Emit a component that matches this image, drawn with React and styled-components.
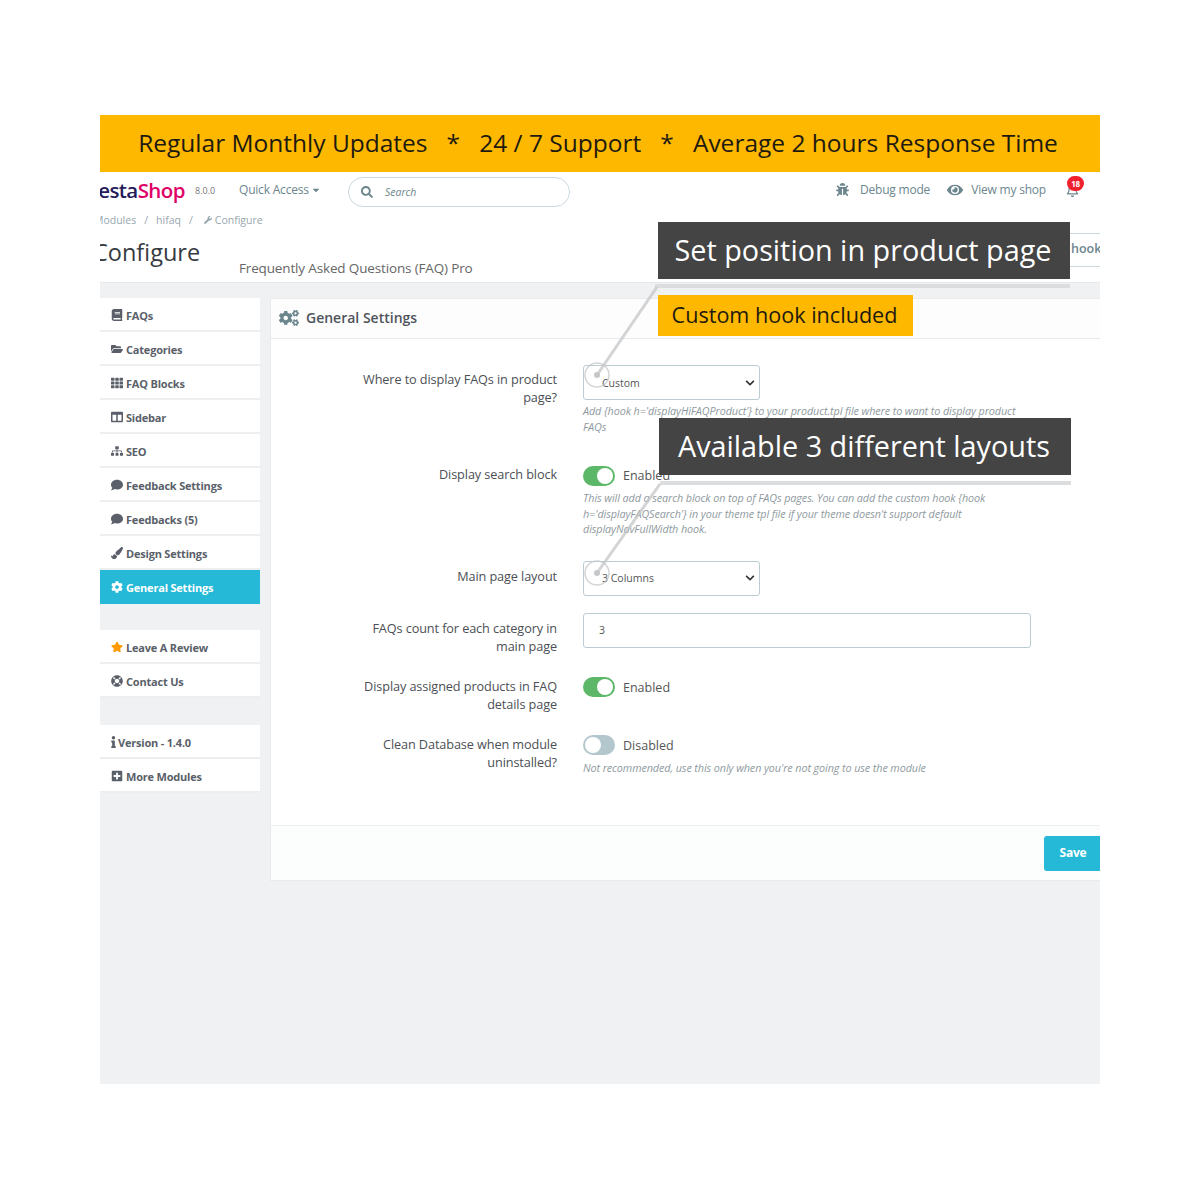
import React from "react";
import styled, { createGlobalStyle } from "styled-components";
import {
  FaBook, FaFolderOpen, FaTh, FaColumns, FaSitemap, FaComment, FaPaintBrush, FaCog,
  FaStar, FaLifeRing, FaInfo, FaPlusSquare, FaBug, FaEye, FaRegBell, FaSearch, FaWrench,
  FaCogs, FaCaretDown, FaChevronDown,
} from "react-icons/fa";

const Global = createGlobalStyle`
  body {
    margin: 0;
    background: #fff;
    font-family: "Open Sans", "Liberation Sans", sans-serif;
  }
`;

const Frame = styled.div`
  position: relative;
  overflow: hidden;
  width: 1000px;
  height: 969px;
  margin: 115px auto 0;
  background: #eff1f2;
`;

const Banner = styled.div`
  height: 57px;
  padding-right: 4px;
  background: #ffb800;
  color: #1e1a10;
  font-size: 24.5px;
  line-height: 55px;
  white-space: pre;
  text-align: center;
`;

const Header = styled.header`
  height: 111px;
  background: #fff;
  border-bottom: 1px solid #e6e9ea;
  box-sizing: border-box;
`;

const TopBar = styled.div`
  display: flex;
  align-items: center;
  height: 37px;
  color: #6c868e;
  font-size: 12px;
`;

const Logo = styled.div`
  margin: -2px 0 0 -22px;
  width: 107px;
  font-size: 20.5px;
  font-weight: 600;
  letter-spacing: -0.6px;
  color: #251b5b;
  white-space: nowrap;
  span {
    color: #df0067;
  }
`;

const Version = styled.span`
  margin-left: 10px;
  width: 44px;
  font-size: 9px;
  color: #777;
`;

const QuickAccess = styled.div`
  display: flex;
  align-items: center;
  gap: 2px;
  width: 109px;
  color: #6c868e;
  letter-spacing: -0.2px;
  margin-top: -2px;
`;

const SearchBox = styled.div`
  display: flex;
  align-items: center;
  gap: 12px;
  box-sizing: border-box;
  width: 222px;
  height: 30px;
  margin-top: 2px;
  padding-left: 12px;
  border: 1px solid #c9d9de;
  border-radius: 15px;
  color: #6c868e;
  font-size: 10.5px;
  font-style: italic;
`;

const TopRight = styled.div`
  display: flex;
  align-items: center;
  margin-left: auto;
  margin-right: 21px;
  letter-spacing: -0.2px;
  margin-top: -2px;
`;

const TopLink = styled.span`
  display: flex;
  align-items: center;
  gap: ${(p) => p.$gap}px;
  margin-right: ${(p) => p.$right}px;
`;

const BellWrap = styled.span`
  position: relative;
  display: flex;
  font-size: 13px;
  margin-top: 2px;
`;

const Badge = styled.span`
  position: absolute;
  top: -8px;
  left: 1px;
  width: 17px;
  height: 15px;
  border-radius: 8px;
  background: #f0202f;
  color: #fff;
  font-size: 8px;
  font-weight: 700;
  line-height: 15px;
  text-align: center;
`;

const Crumbs = styled.div`
  display: flex;
  align-items: center;
  gap: 8px;
  height: 18px;
  margin: 2px 0 1px -6px;
  color: #97a7ae;
  font-size: 10.5px;
  svg {
    font-size: 8px;
    margin-right: -5px;
    margin-left: 3px;
  }
`;

const TitleRow = styled.div`
  display: flex;
  align-items: flex-end;
  height: 46px;
  position: relative;
`;

const Title = styled.h1`
  margin: 0 0 0 -7px;
  width: 146px;
  align-self: flex-start;
  padding-top: 6px;
  font-size: 23.5px;
  font-weight: 400;
  line-height: 32px;
  color: #363a41;
`;

const Subtitle = styled.span`
  font-size: 13.5px;
  letter-spacing: -0.15px;
  color: #666;
  margin-bottom: -1px;
`;

const HookButton = styled.span`
  position: absolute;
  top: 3px;
  right: -30px;
  box-sizing: border-box;
  width: 100px;
  height: 34px;
  padding-left: 40px;
  border: 1px solid #c9d9de;
  color: #6c868e;
  font-size: 12.5px;
  font-weight: 600;
  line-height: 30px;
`;

const Body = styled.div`
  display: flex;
  gap: 10px;
  padding-top: 15px;
`;

const Side = styled.nav`
  display: flex;
  flex-direction: column;
  gap: 26px;
  width: 160px;
  flex: none;
`;

const SideGroup = styled.div`
  display: flex;
  flex-direction: column;
  margin-top: ${(p) => p.$top || 0}px;
`;

const SideItem = styled.div`
  display: flex;
  align-items: center;
  gap: 3px;
  box-sizing: border-box;
  height: 34px;
  padding: 2px 0 0 11px;
  font-size: 11px;
  font-weight: 700;
  letter-spacing: -0.2px;
  color: ${(p) => (p.$active ? "#fff" : "#5a5f69")};
  background: ${(p) => (p.$active ? "#25b9d7" : "#fff")};
  border-bottom: 2px solid ${(p) => (p.$active ? "#25b9d7" : "#eceeef")};
  svg {
    flex: none;
    font-size: 12px;
  }
`;

const InfoIcon = styled(FaInfo)`
  width: 5px;
  margin-right: -1px;
`;

const Panel = styled.section`
  flex: none;
  width: 850px;
  height: 583px;
  box-sizing: border-box;
  background: #fff;
  border: 1px solid #e8eaeb;
  display: flex;
  flex-direction: column;
`;

const PanelHead = styled.div`
  display: flex;
  align-items: center;
  gap: 7px;
  height: 40px;
  flex: none;
  padding: 0 0 2px 8px;
  box-sizing: border-box;
  border-bottom: 1px solid #e8eaeb;
  font-size: 14px;
  font-weight: 600;
  color: #4f545c;
  background: #fdfdfd;
  svg {
    font-size: 20px;
    color: #6c868e;
  }
`;

const Form = styled.div`
  flex: 1;
  padding-top: 26px;
`;

const Row = styled.div`
  display: grid;
  grid-template-columns: 286px 1fr;
  column-gap: 26px;
  margin-bottom: ${(p) => p.$after}px;
`;

const Label = styled.label`
  padding-top: ${(p) => p.$top || 0}px;
  font-size: 12.7px;
  line-height: 18px;
  letter-spacing: -0.1px;
  color: #4c4f55;
  text-align: right;
`;

const Select = styled.div`
  display: flex;
  align-items: center;
  justify-content: space-between;
  box-sizing: border-box;
  width: 177px;
  height: 35px;
  padding: 0 4px 0 18px;
  border: 1px solid #bbcdd2;
  border-radius: 3px;
  font-size: 10.5px;
  color: #555;
  svg {
    font-size: 10px;
    color: #333;
  }
`;

const Input = styled.div`
  box-sizing: border-box;
  width: 448px;
  height: 35px;
  padding-left: 15px;
  border: 1px solid #bbcdd2;
  border-radius: 3px;
  font-size: 10.5px;
  line-height: 33px;
  color: #555;
`;

const SwitchRow = styled.div`
  display: flex;
  align-items: center;
  gap: 8px;
  height: 21px;
  font-size: 12.5px;
  color: #555;
`;

const Track = styled.span`
  position: relative;
  display: block;
  width: 32px;
  height: 20px;
  border-radius: 10px;
  background: ${(p) => (p.$on ? "#5cb868" : "#b3c7cd")};
  &::after {
    content: "";
    position: absolute;
    top: 2px;
    left: ${(p) => (p.$on ? "14px" : "2px")};
    width: 16px;
    height: 16px;
    border-radius: 50%;
    background: #fff;
  }
`;

const Help = styled.p`
  margin: ${(p) => p.$top}px 0 0;
  width: 440px;
  font-size: 10.8px;
  line-height: 15.5px;
  font-style: italic;
  letter-spacing: -0.1px;
  color: #8f9aa0;
  white-space: pre;
`;

const PanelFoot = styled.div`
  display: flex;
  justify-content: flex-end;
  align-items: center;
  flex: none;
  height: 54px;
  padding-right: 5px;
  border-top: 1px solid #eceeef;
  background: #fcfdfd;
`;

const Save = styled.button`
  width: 70px;
  height: 35px;
  padding: 0 12px 2px 0;
  border: 0;
  border-radius: 3px;
  background: #25b9d7;
  color: #fff;
  font-family: inherit;
  font-size: 12px;
  font-weight: 700;
  letter-spacing: -0.2px;
`;

const Lines = styled.svg`
  position: absolute;
  inset: 0;
  width: 1000px;
  height: 969px;
  pointer-events: none;
`;

const Callout = styled.div`
  position: absolute;
  left: ${(p) => p.$x}px;
  top: ${(p) => p.$y}px;
  width: ${(p) => p.$w}px;
  height: ${(p) => p.$h}px;
  padding-right: 2px;
  box-sizing: border-box;
  background: ${(p) => (p.$accent ? "#ffb800" : "#444444")};
  color: ${(p) => (p.$accent ? "#1e1a10" : "#fff")};
  font-size: ${(p) => p.$size}px;
  line-height: ${(p) => p.$h - 2}px;
  text-align: center;
  white-space: nowrap;
`;

const mainItems = [
  [FaBook, "FAQs"],
  [FaFolderOpen, "Categories"],
  [FaTh, "FAQ Blocks"],
  [FaColumns, "Sidebar"],
  [FaSitemap, "SEO"],
  [FaComment, "Feedback Settings"],
  [FaComment, "Feedbacks (5)"],
  [FaPaintBrush, "Design Settings"],
];

export default function App() {
  return (
    <Frame>
      <Global />
      <Banner>{"Regular Monthly Updates   *   24 / 7 Support   *   Average 2 hours Response Time"}</Banner>
      <Header>
        <TopBar>
          <Logo>Presta<span>Shop</span></Logo>
          <Version>8.0.0</Version>
          <QuickAccess>Quick Access <FaCaretDown size={10} /></QuickAccess>
          <SearchBox><FaSearch size={12} /> Search</SearchBox>
          <TopRight>
            <TopLink $gap={11} $right={17}><FaBug size={13} /> Debug mode</TopLink>
            <TopLink $gap={8} $right={20}><FaEye size={16} /> View my shop</TopLink>
            <BellWrap><FaRegBell /><Badge>18</Badge></BellWrap>
          </TopRight>
        </TopBar>
        <Crumbs>
          <span>Modules</span><span>/</span><span>hifaq</span><span>/</span>
          <FaWrench /><span>Configure</span>
        </Crumbs>
        <TitleRow>
          <Title>Configure</Title>
          <Subtitle>Frequently Asked Questions (FAQ) Pro</Subtitle>
          <HookButton>hook</HookButton>
        </TitleRow>
      </Header>
      <Body>
        <Side>
          <SideGroup>
            {mainItems.map(([Icon, text]) => (
              <SideItem key={text}><Icon /> {text}</SideItem>
            ))}
            <SideItem $active><FaCog /> General Settings</SideItem>
          </SideGroup>
          <SideGroup>
            <SideItem><FaStar color="#ff9a00" /> Leave A Review</SideItem>
            <SideItem><FaLifeRing /> Contact Us</SideItem>
          </SideGroup>
          <SideGroup $top={1}>
            <SideItem><InfoIcon /> Version - 1.4.0</SideItem>
            <SideItem><FaPlusSquare /> More Modules</SideItem>
          </SideGroup>
        </Side>
        <Panel>
          <PanelHead><FaCogs /> General Settings</PanelHead>
          <Form>
            <Row $after={31}>
              <Label $top={5}>Where to display FAQs in product<br />page?</Label>
              <div>
                <Select>Custom <FaChevronDown /></Select>
                <Help $top={3}>{"Add {hook h='displayHiFAQProduct'} to your product.tpl file where to want to display product\nFAQs"}</Help>
              </div>
            </Row>
            <Row $after={24}>
              <Label>Display search block</Label>
              <div>
                <SwitchRow><Track $on /> Enabled</SwitchRow>
                <Help $top={4}>{"This will add a search block on top of FAQs pages. You can add the custom hook {hook\nh='displayFAQSearch'} in your theme tpl file if your theme doesn't support default\ndisplayNavFullWidth hook."}</Help>
              </div>
            </Row>
            <Row $after={17}>
              <Label $top={6}>Main page layout</Label>
              <Select>3 Columns <FaChevronDown /></Select>
            </Row>
            <Row $after={22}>
              <Label $top={6}>FAQs count for each category in<br />main page</Label>
              <Input>3</Input>
            </Row>
            <Row $after={22}>
              <Label>Display assigned products in FAQ<br />details page</Label>
              <SwitchRow><Track $on /> Enabled</SwitchRow>
            </Row>
            <Row $after={0}>
              <Label>Clean Database when module<br />uninstalled?</Label>
              <div>
                <SwitchRow><Track /> Disabled</SwitchRow>
                <Help $top={4}>Not recommended, use this only when you're not going to use the module</Help>
              </div>
            </Row>
          </Form>
          <PanelFoot><Save>Save</Save></PanelFoot>
        </Panel>
      </Body>

      <Lines viewBox="0 0 1000 969">
        <g fill="none" stroke="#c4c6c8" strokeOpacity="0.75">
          <path d="M555 171 H970" strokeWidth="4" stroke="#dcdddf" strokeOpacity="1" />
          <path d="M557 172 L497 260" strokeWidth="3" />
          <circle cx="497" cy="260" r="12" strokeWidth="1.5" />
          <circle cx="497" cy="260" r="3" fill="#c4c6c8" stroke="none" />
          <path d="M560 368 H971" strokeWidth="4" stroke="#dcdddf" strokeOpacity="1" />
          <path d="M560 369 L497 458" strokeWidth="3" />
          <circle cx="497" cy="458" r="12" strokeWidth="1.5" />
          <circle cx="497" cy="458" r="3" fill="#c4c6c8" stroke="none" />
        </g>
      </Lines>
      <Callout $x={558} $y={107} $w={412} $h={57} $size={28.8}>Set position in product page</Callout>
      <Callout $accent $x={558} $y={180} $w={255} $h={41} $size={21.6}>Custom hook included</Callout>
      <Callout $x={559} $y={303} $w={412} $h={57} $size={28.8}>Available 3 different layouts</Callout>
    </Frame>
  );
}
